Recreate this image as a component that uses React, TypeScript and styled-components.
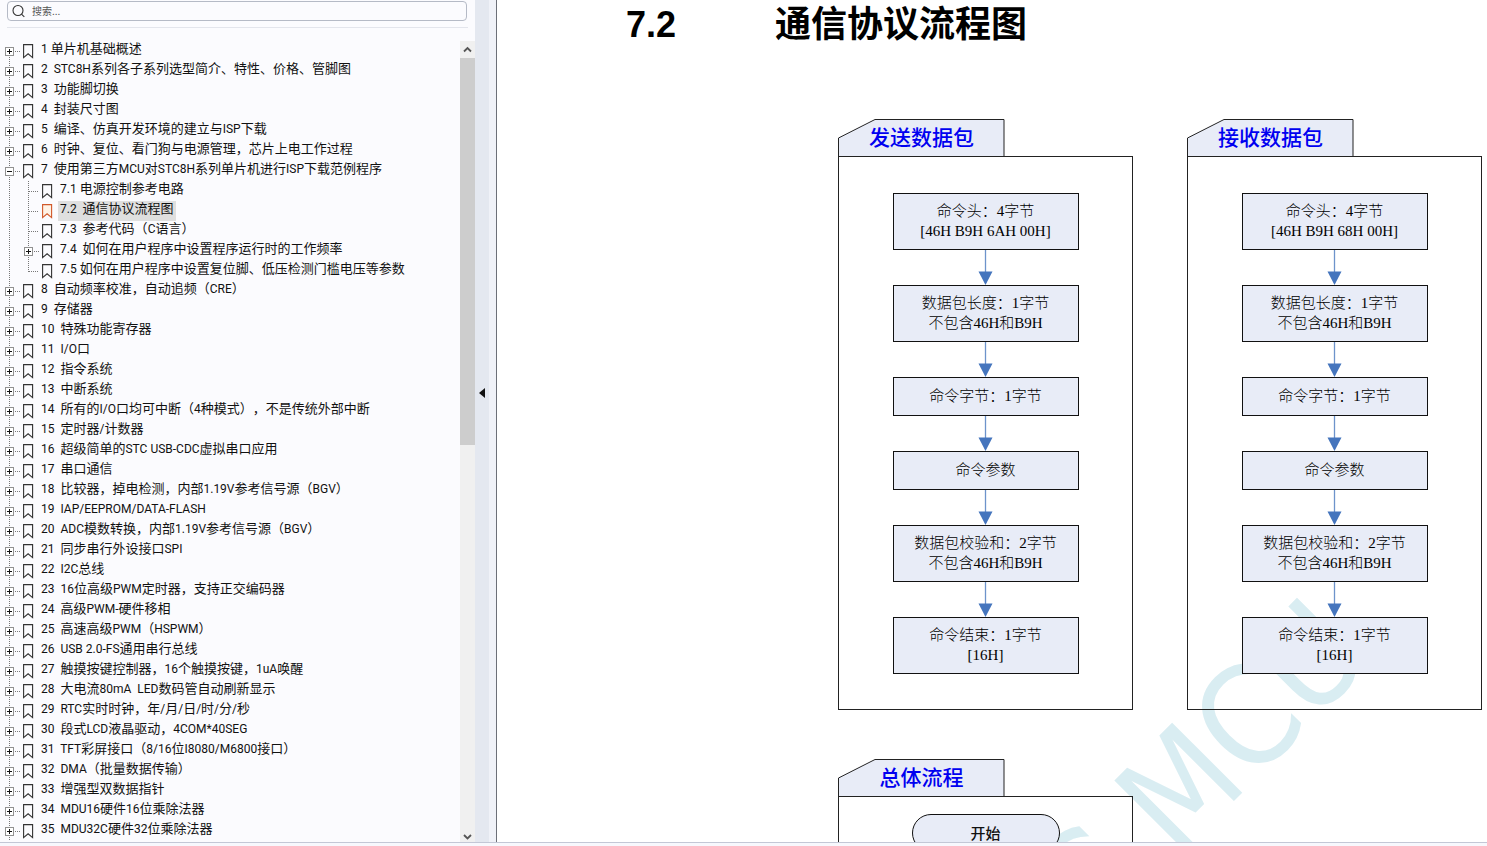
import React from "react";
import styled, { createGlobalStyle, css } from "styled-components";

const GlobalStyle = createGlobalStyle`
  *, *::before, *::after { box-sizing: border-box; }
  body { margin: 0; background: #fff; font-family: "Noto Sans CJK SC", sans-serif; color: #111; }
  ul { list-style: none; margin: 0; padding: 0; }
  button { padding: 0; border: 0; background: none; font: inherit; color: inherit; cursor: pointer; }
`;

const sans = `"Noto Sans CJK SC", sans-serif`;
const latin = `Roboto, "Noto Sans CJK SC", sans-serif`;

const Shell = styled.div`
  display: flex;
  flex-direction: column;
  height: 100vh;
  overflow: hidden;
`;

const Workspace = styled.div`
  display: flex;
  flex: 1;
  min-height: 0;
`;

const StatusStrip = styled.footer`
  flex: none;
  height: 4px;
  border-top: 1px solid #c3c7d6;
  background: #f7f8fd;
`;

/* ---------- bookmark panel ---------- */

const Sidebar = styled.aside`
  display: flex;
  flex-direction: column;
  flex: none;
  width: 475px;
  background: #fbfbfe;
`;

const SearchArea = styled.div`
  flex: none;
  height: 28px;
  margin: 0 7px 5px;
  padding-top: 1px;
  border-bottom: 1px solid #e3e5ec;
`;

const SearchField = styled.label`
  display: flex;
  align-items: center;
  gap: 7px;
  width: 460px;
  height: 20px;
  padding: 0 4px;
  border: 1px solid #b5bac6;
  border-radius: 4px;
`;

const SearchInput = styled.input`
  flex: 1;
  min-width: 0;
  padding: 0;
  border: 0;
  outline: 0;
  background: transparent;
  font: 10px/16px ${sans};
  color: #333;
  &::placeholder { color: #555; opacity: 1; }
`;

const TreeArea = styled.div`
  display: flex;
  flex: 1;
  min-height: 0;
`;

const Tree = styled.ul`
  flex: 1;
  min-width: 0;
  overflow: hidden;
  && { padding-top: 8px; }
`;

const dots = (from: string, height: string) => css`
  background-image: repeating-linear-gradient(#777 0 1px, transparent 1px 2px);
  background-repeat: no-repeat;
  background-position: 9px ${from};
  background-size: 1px ${height};
`;

const Row = styled.div`
  display: flex;
  height: 20px;
`;

const Rail = styled.span`
  flex: none;
  width: 19px;
  ${dots("0", "100%")}
`;

const Branch = styled.span<{ $edge?: "first" | "last" }>`
  display: flex;
  align-items: center;
  flex: none;
  width: 23px;
  padding: 0 3px 0 5px;
  ${({ $edge }) =>
    $edge === "first" ? dots("10px", "10px") : $edge === "last" ? dots("0", "11px") : dots("0", "100%")}
`;

const Stem = styled.span<{ $leaf?: boolean }>`
  flex: 1;
  height: 1px;
  margin-left: ${({ $leaf }) => ($leaf ? 5 : 1)}px;
  background-image: repeating-linear-gradient(90deg, #777 0 1px, transparent 1px 2px);
`;

const Toggle = styled.button`
  display: flex;
  flex: none;
  width: 9px;
  height: 9px;
  background: #fff;
`;

const MarkCell = styled.span`
  flex: none;
  width: 16px;
  padding-top: 3px;
  line-height: 0;
`;

const Title = styled.a<{ $current?: boolean }>`
  padding: 0 2px;
  background: ${({ $current }) => ($current ? "#dfdfdf" : "transparent")};
  color: #111;
  font: 13px/14px ${sans};
  text-spacing-trim: space-all;
  white-space: pre;
  text-decoration: none;
`;

const Latin = styled.span`
  font-family: ${latin};
  font-size: 12px;
`;

const ScrollBar = styled.div`
  display: flex;
  flex-direction: column;
  flex: none;
  width: 15px;
  margin-top: 8px;
  background: #f0f0f0;
`;

const ScrollButton = styled.button<{ $height: number }>`
  display: flex;
  align-items: center;
  justify-content: center;
  flex: none;
  height: ${({ $height }) => $height}px;
`;

const ScrollTrack = styled.div`
  flex: 1;
  min-height: 0;
`;

const ScrollThumb = styled.div`
  height: 50%;
  background: #cdcdcd;
`;

const Splitter = styled.div`
  display: flex;
  flex: none;
  width: 22px;
  border-right: 1px solid #6c6f78;
  background: #f0f2f8;
`;

const CollapseButton = styled.button`
  display: flex;
  align-items: center;
  justify-content: center;
  width: 14px;
  padding-bottom: 56px;
  background: #e4e8f0;
`;

/* ---------- document page ---------- */

const Page = styled.main`
  position: relative;
  flex: 1;
  min-width: 0;
  overflow: hidden;
  isolation: isolate;
  background: #fff;
`;

const Watermark = styled.div`
  position: absolute;
  z-index: -1;
  top: 934px;
  left: 489px;
  transform: rotate(-45deg);
  transform-origin: 0 115px;
  font: 136px/136px "DejaVu Sans Condensed", "DejaVu Sans", sans-serif;
  white-space: nowrap;
  color: #d9edf2;
`;

const Heading = styled.h1`
  display: flex;
  margin: 0 0 69px;
  padding-left: 129px;
  font: bold 36px/50px "Liberation Sans", "Noto Sans CJK SC", sans-serif;
  color: #000;
`;

const HeadingNumber = styled.span`
  flex: none;
  width: 149px;
`;

const Diagrams = styled.div`
  display: grid;
  grid-template-columns: 295px 295px;
  gap: 49px 54px;
  padding-left: 341px;
`;

const Folder = styled.section`
  display: flex;
  flex-direction: column;
`;

const FolderTab = styled.h2`
  position: relative;
  width: 167px;
  height: 38px;
  margin: 0 0 -1px;
  font: 500 21px/35px ${sans};
  text-align: center;
  color: #0000f0;
`;

const TabShape = styled.svg`
  position: absolute;
  z-index: -1;
  inset: 0;
`;

const FolderBody = styled.div`
  display: flex;
  flex-direction: column;
  align-items: center;
  padding: 36px 0 35px;
  border: 1px solid #222;
`;

const Step = styled.div`
  width: 186px;
  padding: 7px 0 8px;
  border: 1px solid #111;
  background: #e8ecf7;
  font: 15px/20px "Liberation Serif", "Noto Sans CJK SC", serif;
  text-align: center;
  color: #000;

  &[data-lines="1"] { line-height: 22px; }
`;

const StepLine = styled.div`
  font-weight: 300;
`;

const Terminal = styled.div`
  width: 148px;
  margin-top: -19px;
  border: 1px solid #111;
  border-radius: 19px;
  background: #e8ecf7;
  font: 500 15px/36px ${sans};
  text-align: center;
`;

type Bookmark = { title: string; current?: boolean; expandable?: boolean; children?: Bookmark[] };

const bookmarks: Bookmark[] = [
  { title: "1 单片机基础概述" },
  { title: "2  STC8H系列各子系列选型简介、特性、价格、管脚图" },
  { title: "3  功能脚切换" },
  { title: "4  封装尺寸图" },
  { title: "5  编译、仿真开发环境的建立与ISP下载" },
  { title: "6  时钟、复位、看门狗与电源管理，芯片上电工作过程" },
  {
    title: "7  使用第三方MCU对STC8H系列单片机进行ISP下载范例程序",
    children: [
      { title: "7.1 电源控制参考电路" },
      { title: "7.2  通信协议流程图", current: true },
      { title: "7.3  参考代码（C语言）" },
      { title: "7.4  如何在用户程序中设置程序运行时的工作频率", expandable: true },
      { title: "7.5 如何在用户程序中设置复位脚、低压检测门槛电压等参数" },
    ],
  },
  { title: "8  自动频率校准，自动追频（CRE）" },
  { title: "9  存储器" },
  { title: "10  特殊功能寄存器" },
  { title: "11  I/O口" },
  { title: "12  指令系统" },
  { title: "13  中断系统" },
  { title: "14  所有的I/O口均可中断（4种模式），不是传统外部中断" },
  { title: "15  定时器/计数器" },
  { title: "16  超级简单的STC USB-CDC虚拟串口应用" },
  { title: "17  串口通信" },
  { title: "18  比较器，掉电检测，内部1.19V参考信号源（BGV）" },
  { title: "19  IAP/EEPROM/DATA-FLASH" },
  { title: "20  ADC模数转换，内部1.19V参考信号源（BGV）" },
  { title: "21  同步串行外设接口SPI" },
  { title: "22  I2C总线" },
  { title: "23  16位高级PWM定时器，支持正交编码器" },
  { title: "24  高级PWM-硬件移相" },
  { title: "25  高速高级PWM（HSPWM）" },
  { title: "26  USB 2.0-FS通用串行总线" },
  { title: "27  触摸按键控制器，16个触摸按键，1uA唤醒" },
  { title: "28  大电流80mA  LED数码管自动刷新显示" },
  { title: "29  RTC实时时钟，年/月/日/时/分/秒" },
  { title: "30  段式LCD液晶驱动，4COM*40SEG" },
  { title: "31  TFT彩屏接口（8/16位I8080/M6800接口）" },
  { title: "32  DMA（批量数据传输）" },
  { title: "33  增强型双数据指针" },
  { title: "34  MDU16硬件16位乘除法器" },
  { title: "35  MDU32C硬件32位乘除法器" },
];

const packetSteps = (header: string): string[][] => [
  ["命令头：4字节", header],
  ["数据包长度：1字节", "不包含46H和B9H"],
  ["命令字节：1字节"],
  ["命令参数"],
  ["数据包校验和：2字节", "不包含46H和B9H"],
  ["命令结束：1字节", "[16H]"],
];

function MixedText({ text }: { text: string }) {
  return (
    <>
      {text.split(/([\x20-\x7e]+)/).map((part, i) =>
        i % 2 ? <Latin key={i}>{part}</Latin> : part
      )}
    </>
  );
}

function ToggleBox({ open }: { open?: boolean }) {
  return (
    <Toggle type="button" aria-label={open ? "折叠" : "展开"}>
      <svg width="9" height="9" viewBox="0 0 9 9" shapeRendering="crispEdges">
        <rect x="0.5" y="0.5" width="8" height="8" fill="#fff" stroke="#919191" />
        <path d={open ? "M2 4.5h5" : "M2 4.5h5M4.5 2v5"} stroke="#111" />
      </svg>
    </Toggle>
  );
}

function BookmarkIcon({ current }: { current?: boolean }) {
  return (
    <svg width="11" height="15" viewBox="0 0 11 15" fill="none">
      <path
        d="M.6.6h9v13L5.100 9.800.6 13.600z"
        fill={current ? "#fff3e6" : "none"}
        stroke={current ? "#d0582a" : "#333"}
        strokeWidth="1.1"
      />
    </svg>
  );
}

function BookmarkNode({ item, nested, edge }: { item: Bookmark; nested?: boolean; edge?: "first" | "last" }) {
  const hasToggle = !nested || item.expandable;
  return (
    <li>
      <Row>
        {nested && <Rail />}
        <Branch $edge={edge}>
          {hasToggle && <ToggleBox open={!!item.children} />}
          <Stem $leaf={!hasToggle} />
        </Branch>
        <MarkCell>
          <BookmarkIcon current={item.current} />
        </MarkCell>
        <Title href="#" $current={item.current}>
          <MixedText text={item.title} />
        </Title>
      </Row>
      {item.children && (
        <ul>
          {item.children.map((child, i) => (
            <BookmarkNode
              key={child.title}
              item={child}
              nested
              edge={i === item.children!.length - 1 ? "last" : undefined}
            />
          ))}
        </ul>
      )}
    </li>
  );
}

function Arrow() {
  return (
    <svg width="15" height="35" viewBox="0 0 15 35">
      <path d="M7.5 0v23" stroke="#6d93cb" strokeWidth="1.3" />
      <path d="M.5 21.500h14L7.500 35z" fill="#4575bd" />
    </svg>
  );
}

function FolderPanel({ title, children }: { title: string; children: React.ReactNode }) {
  return (
    <Folder>
      <FolderTab>
        <TabShape width="167" height="38" viewBox="0 0 167 38" aria-hidden="true">
          <path d="M.5 37.5V19L37 .5h129v37z" fill="#e8ecf7" stroke="#222" />
        </TabShape>
        {title}
      </FolderTab>
      <FolderBody>{children}</FolderBody>
    </Folder>
  );
}

function PacketFlow({ header }: { header: string }) {
  return (
    <>
      {packetSteps(header).map((lines, i) => (
        <React.Fragment key={i}>
          {i > 0 && <Arrow />}
          <Step data-lines={lines.length}>
            {lines.map((line) => (
              <StepLine key={line}>{line}</StepLine>
            ))}
          </Step>
        </React.Fragment>
      ))}
    </>
  );
}

export default function App() {
  return (
    <>
      <GlobalStyle />
      <Shell>
        <Workspace>
          <Sidebar>
            <SearchArea>
              <SearchField>
                <svg width="13" height="14" viewBox="0 0 13 14" fill="none" stroke="#333" strokeWidth="1.1">
                  <circle cx="6" cy="6.500" r="5" />
                  <path d="M9.500 10.200l2.800 2.600" />
                </svg>
                <SearchInput type="text" placeholder="搜索..." aria-label="搜索" />
              </SearchField>
            </SearchArea>
            <TreeArea>
              <Tree>
                {bookmarks.map((item, i) => (
                  <BookmarkNode key={item.title} item={item} edge={i === 0 ? "first" : undefined} />
                ))}
              </Tree>
              <ScrollBar>
                <ScrollButton type="button" $height={17} aria-label="向上滚动">
                  <svg width="9" height="7" viewBox="0 0 9 7" fill="none" stroke="#555" strokeWidth="1.8">
                    <path d="M1 5.500L4.500 2 8 5.500" />
                  </svg>
                </ScrollButton>
                <ScrollTrack>
                  <ScrollThumb />
                </ScrollTrack>
                <ScrollButton type="button" $height={11} aria-label="向下滚动">
                  <svg width="9" height="7" viewBox="0 0 9 7" fill="none" stroke="#555" strokeWidth="1.8">
                    <path d="M1 2l3.500 3.500L8 2" />
                  </svg>
                </ScrollButton>
              </ScrollBar>
            </TreeArea>
          </Sidebar>
          <Splitter>
            <CollapseButton type="button" aria-label="收起书签栏">
              <svg width="6" height="10" viewBox="0 0 6 10">
                <path d="M6 0v10L0 5z" fill="#111" />
              </svg>
            </CollapseButton>
          </Splitter>
          <Page>
            <Watermark aria-hidden="true">STC MCU</Watermark>
            <Heading>
              <HeadingNumber>7.2</HeadingNumber>
              <span>通信协议流程图</span>
            </Heading>
            <Diagrams>
              <FolderPanel title="发送数据包">
                <PacketFlow header="[46H B9H 6AH 00H]" />
              </FolderPanel>
              <FolderPanel title="接收数据包">
                <PacketFlow header="[46H B9H 68H 00H]" />
              </FolderPanel>
              <FolderPanel title="总体流程">
                <Terminal>开始</Terminal>
              </FolderPanel>
            </Diagrams>
          </Page>
        </Workspace>
        <StatusStrip />
      </Shell>
    </>
  );
}
